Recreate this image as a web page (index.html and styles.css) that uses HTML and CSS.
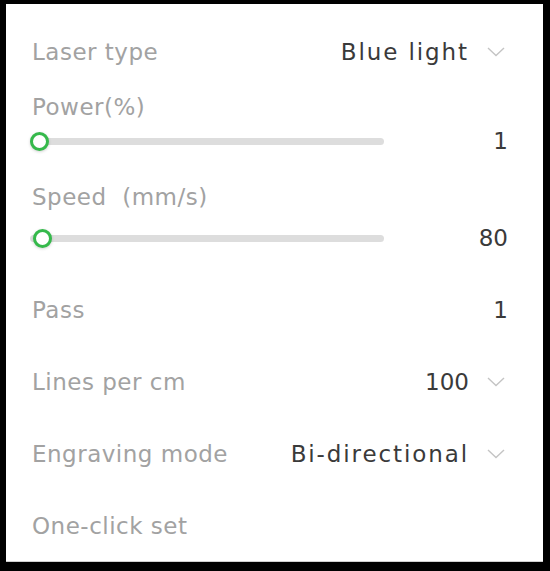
FILE: index.html
```html
<!DOCTYPE html>
<html lang="en">
<head>
    <meta charset="UTF-8">
    <meta name="viewport" content="width=device-width, initial-scale=1.0">
    <title>Laser settings</title>
    <link rel="stylesheet" href="styles.css">
</head>
<body>
    <div class="panel">
        <div class="row">
            <span class="label">Laser type</span>
            <span class="select">
                <span class="value">Blue light</span>
                <svg class="chevron" width="18" height="10" viewBox="0 0 18 10"><path d="M1 1 L9 8.5 L17 1" fill="none" stroke="#c4c4c4" stroke-width="1.4"/></svg>
            </span>
        </div>

        <div class="slider-group power">
            <div class="label slider-label">Power(%)</div>
            <div class="slider-row">
                <div class="track"><span class="thumb" style="left: 0px"></span></div>
                <span class="value num">1</span>
            </div>
        </div>

        <div class="slider-group speed">
            <div class="label slider-label">Speed&nbsp;&nbsp;(mm/s)</div>
            <div class="slider-row">
                <div class="track"><span class="thumb" style="left: 3px"></span></div>
                <span class="value num">80</span>
            </div>
        </div>

        <div class="row first-plain">
            <span class="label">Pass</span>
            <span class="value num">1</span>
        </div>

        <div class="row">
            <span class="label">Lines per cm</span>
            <span class="select">
                <span class="value num">100</span>
                <svg class="chevron" width="18" height="10" viewBox="0 0 18 10"><path d="M1 1 L9 8.5 L17 1" fill="none" stroke="#c4c4c4" stroke-width="1.4"/></svg>
            </span>
        </div>

        <div class="row">
            <span class="label">Engraving mode</span>
            <span class="select">
                <span class="value">Bi-directional</span>
                <svg class="chevron" width="18" height="10" viewBox="0 0 18 10"><path d="M1 1 L9 8.5 L17 1" fill="none" stroke="#c4c4c4" stroke-width="1.4"/></svg>
            </span>
        </div>

        <div class="row">
            <span class="label">One-click set</span>
        </div>
    </div>
</body>
</html>
```

FILE: styles.css
```css
body {
    margin: 0;
    padding: 4px 7px 9px 6px;
    background-color: #000;
    font-family: "DejaVu Sans", "Open Sans", sans-serif;
}

.panel {
    background: #fff;
    border-bottom: 1px solid #cfcfcf;
    height: 558px;
    box-sizing: border-box;
    padding: 12px 35px 0 26px;
}

.row {
    display: flex;
    align-items: center;
    justify-content: space-between;
    height: 72px;
}

.label {
    color: #a2a2a2;
    font-size: 23px;
    letter-spacing: 0.5px;
}

.value {
    color: #3a3a3a;
    font-size: 23px;
    letter-spacing: 1.9px;
}

.value.num {
    letter-spacing: 0;
}

.select {
    display: flex;
    align-items: center;
    margin-right: 3px;
}

.chevron {
    margin-left: 18px;
}

.slider-label {
    height: 30px;
    line-height: 30px;
}

.power {
    margin-top: 4px;
}

.speed {
    margin-top: 22px;
}

.speed .slider-row {
    margin-top: 7px;
}

.slider-row {
    display: flex;
    align-items: center;
    height: 38px;
}

.track {
    position: relative;
    width: 354px;
    height: 7px;
    margin-left: -2px;
    border-radius: 4px;
    background: #dddddd;
}

.thumb {
    position: absolute;
    top: -6px;
    width: 13px;
    height: 13px;
    border: 3px solid #35b94b;
    border-radius: 50%;
    background: #fff;
    box-shadow: 0 1px 3px rgba(0, 0, 0, 0.18);
}

.slider-row .num {
    margin-left: auto;
}

.first-plain {
    margin-top: 17px;
}
```
